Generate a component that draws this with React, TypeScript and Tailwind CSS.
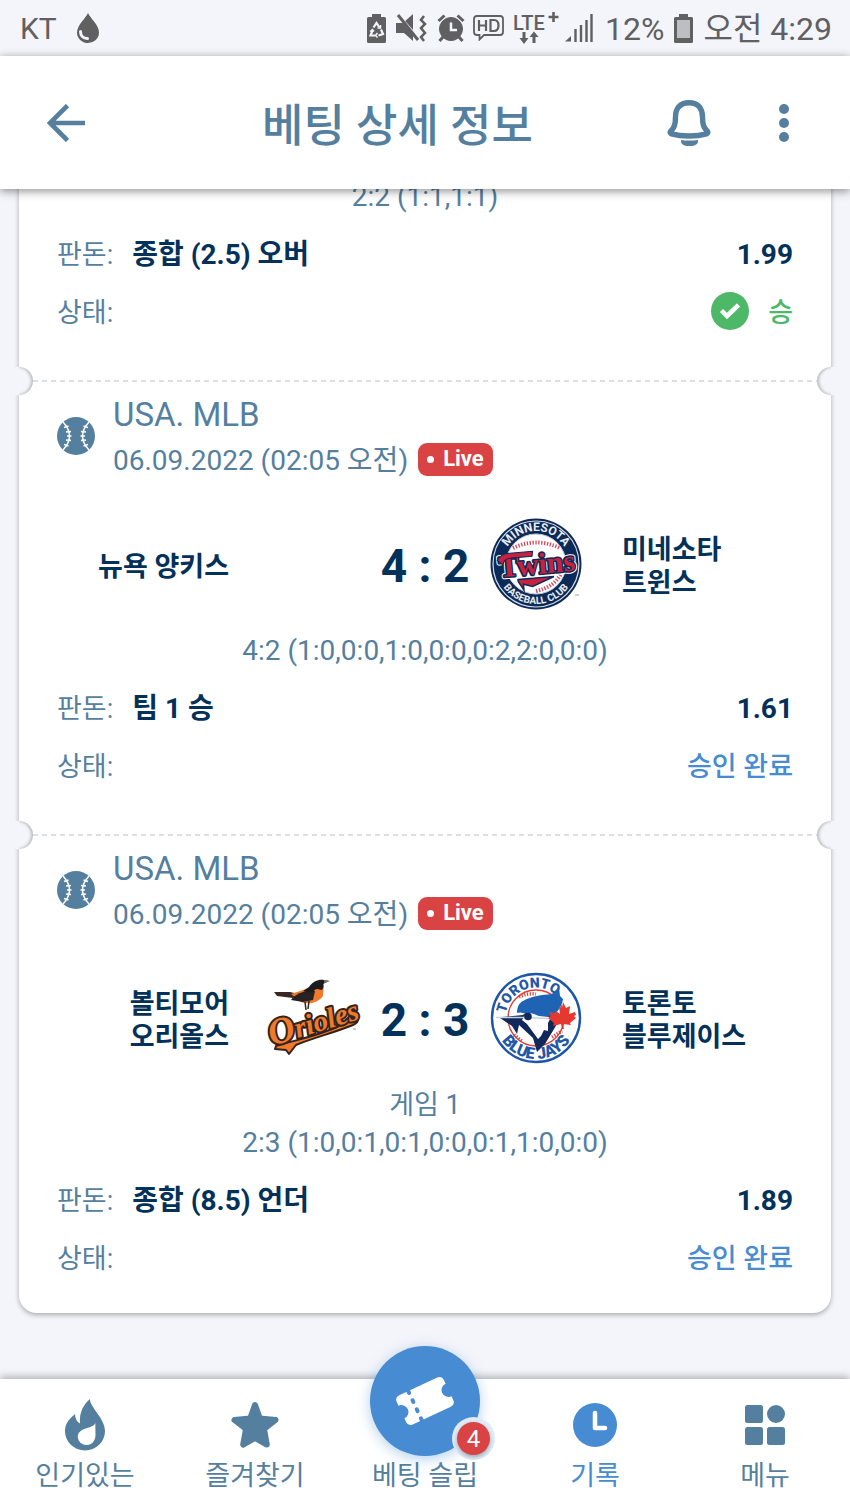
import type { ReactNode } from "react";
import { clsx } from "clsx";

type Pick = { label: string; odds: string; status: "won" | "accepted" };

type Game = {
  id: string;
  league: string;
  date: string;
  home: string[];
  away: string[];
  homeLogo?: ReactNode;
  awayLogo?: ReactNode;
  score: string;
  note?: string;
  periods: string;
  pick: Pick;
};

/* ---------- status bar ---------- */

function StatusBar() {
  return (
    <div className="flex h-14 shrink-0 items-center justify-between bg-[#f4f5fa] pl-5 pr-[18px] text-[#606062]">
      <div className="flex items-center gap-[19px]">
        <span className="pt-[2px] text-[30px] leading-none">KT</span>
        <svg viewBox="0 0 24 30" className="h-[30px] w-6" fill="currentColor">
          <path d="M12 0C10 5 1 12 1 19.500a11 10.500 0 0 0 22 0C23 12 14 5 12 0Z" />
          <path d="M4.500 18.500c0 4 2.500 7 7 7" fill="none" stroke="#f4f5fa" strokeWidth="3" strokeLinecap="round" />
        </svg>
      </div>
      <div className="flex items-center gap-[10px]">
        <svg viewBox="0 0 19 29" className="h-[29px] w-[19px]" fill="currentColor">
          <path d="M5 0h9v3h3.500q1.500 0 1.500 1.500v23q0 1.500-1.500 1.500h-16Q0 29 0 27.500v-23Q0 3 1.500 3H5Z" />
          <g fill="none" stroke="#f4f5fa" strokeWidth="2.200">
            <path d="M6.500 13.500 9.500 9l3 4.500M14 15.500l2 4.500-4.500 1.500M8 21.500H3.500l2-5" />
            <path d="m10.500 19-2 2.500 2 2M13.500 11v3h-3M3 17.500l2.500-2 1.500 2" strokeWidth="1.500" />
          </g>
        </svg>
        <svg viewBox="0 0 31 29" className="h-[29px] w-[31px]" fill="currentColor">
          <path d="M0 9h7L17 0v27l-9-8H0Z" />
          <path d="M0-1 24 26" stroke="#f4f5fa" strokeWidth="3" />
          <path d="M2 1 22 26" stroke="currentColor" strokeWidth="3" />
          <path d="m28 2-3 4 4 4-4 4 4 5-4 4 3 4" fill="none" stroke="currentColor" strokeWidth="2.500" />
        </svg>
        <svg viewBox="0 0 28 28" className="h-7 w-7" fill="none" stroke="currentColor">
          <circle cx="14" cy="15" r="11.500" fill="currentColor" />
          <path d="m1.500 7 6-5.500M26.500 7l-6-5.500" strokeWidth="3" />
          <path d="m6 23-3.500 4M22 23l3.500 4" strokeWidth="3" />
          <path d="M14 8.500V16h6" stroke="#f4f5fa" strokeWidth="2.500" />
        </svg>
        <svg viewBox="0 0 31 26" className="-ml-[2px] h-[26px] w-[31px]" fill="none" stroke="currentColor" strokeWidth="1.800">
          <path d="M4 1h23q3 0 3 3v13q0 3-3 3H11l-4.500 4.500V20H4q-3 0-3-3V4q0-3 3-3Z" />
          <path d="M6 5v11M13 5v11M6 10.500h7M17.500 5v11h3.500q4.500 0 4.500-5.500T21 5Z" strokeWidth="2.200" />
        </svg>
        <svg viewBox="0 0 45 34" className="h-[34px] w-[45px]" fill="currentColor">
          <text x="-1" y="19" fontSize="20" fontWeight="500">LTE</text>
          <path d="M39.500 1v10M34.500 6h10" stroke="currentColor" strokeWidth="2.600" />
          <path d="M8.500 21h3v6h3L10 33l-4.500-6h3ZM18.500 32h3v-6h3L20 20.500 15.500 26h3Z" />
        </svg>
        <svg viewBox="0 0 28 28" className="-ml-1 h-7 w-7" fill="none" stroke="currentColor" strokeWidth="2.400">
          <path d="M0 27.500 6 22v5.500Z" fill="currentColor" stroke="none" />
          <path d="M10.500 15v13M16 11v17M21.500 6v22M26.500 0v28" />
        </svg>
        <span className="ml-[2px] pt-[2px] text-[32px] leading-none">12%</span>
        <svg viewBox="0 0 19 29" className="h-[29px] w-[19px]" fill="currentColor">
          <path d="M5 0h9v3h3.500q1.500 0 1.500 1.500v23q0 1.500-1.500 1.500h-16Q0 29 0 27.500v-23Q0 3 1.500 3H5Z" />
          <path d="M3 6h13v18H3Z" fill="#bdbec3" />
        </svg>
        <span className="pt-[2px] text-[32px] leading-none">오전 4:29</span>
      </div>
    </div>
  );
}

/* ---------- header ---------- */

function Header() {
  return (
    <header className="relative z-10 flex h-[133px] shrink-0 items-stretch bg-white pr-[19px] text-[#557f9f] shadow-[0_2px_9px_rgba(0,0,0,0.45)]">
      <button type="button" aria-label="뒤로" className="grid w-[131px] place-items-center">
        <svg viewBox="0 0 38 38" className="size-[38px]" fill="none" stroke="currentColor" strokeWidth="4.600">
          <path d="M38 19H4M20.500 1.500 3 19l17.500 17.500" />
        </svg>
      </button>
      <h1 className="flex-1 self-center pt-2 pl-[22px] text-center text-[45px] leading-[56px] font-medium">베팅 상세 정보</h1>
      <button type="button" aria-label="알림" className="grid w-[94px] place-items-center">
        <svg viewBox="0 0 44 48" className="h-12 w-11" fill="none" stroke="currentColor" strokeLinejoin="round">
          <path d="M22 3.700C12.500 3.700 8.500 10 8.500 18c0 8-1.500 11-5 14.500-.8 1 0 2 1 2.300 10 3 25 3 35 0 1-.3 1.800-1.300 1-2.300-3.500-3.500-5-6.500-5-14.500C35.500 10 31.500 3.700 22 3.700Z" strokeWidth="5.400" />
          <path d="M14 41c5 .8 11 .8 17 0 .5 4-2.500 6-8.500 6S13.500 45 14 41Z" fill="currentColor" stroke="none" />
        </svg>
      </button>
      <button type="button" aria-label="더보기" className="grid w-[95px] place-items-center">
        <svg viewBox="0 0 10 38" className="h-[38px] w-[10px]" fill="currentColor">
          <circle cx="5" cy="5" r="5" />
          <circle cx="5" cy="19" r="5" />
          <circle cx="5" cy="33" r="5" />
        </svg>
      </button>
    </header>
  );
}

/* ---------- team logos ---------- */

function TwinsLogo() {
  return (
    <svg viewBox="0 0 94 94" className="size-[94px]" role="img" aria-label="Minnesota Twins">
      <defs>
        <path id="twins-top" d="M14 47a33 33 0 0 1 66 0" />
        <path id="twins-bottom" d="M7 47a40 40 0 0 0 80 0" />
      </defs>
      <circle cx="47" cy="47" r="45.500" fill="#0c2a58" />
      <circle cx="47" cy="47" r="43" fill="none" stroke="#d5dae6" strokeWidth="1.200" />
      <circle cx="47" cy="47" r="30" fill="#fff" stroke="#c3cbd9" strokeWidth="1" />
      <g fill="none" stroke="#dc4560" strokeWidth="4" strokeDasharray="1.300 1.600">
        <path d="M24 31q23-11 47 0" />
        <path d="M47 74q19-4 26-19" />
      </g>
      <g fill="#e8ecf3" fontFamily="Roboto" fontWeight="700" textAnchor="middle">
        <text fontSize="12"><textPath href="#twins-top" startOffset="50%">MINNESOTA</textPath></text>
        <text fontSize="10"><textPath href="#twins-bottom" startOffset="50%">BASEBALL CLUB</textPath></text>
      </g>
      <g transform="rotate(-5 47 50)">
        <path d="M28 61h36l-22 8-9-3v6l-5-9Z" fill="#c8203f" stroke="#0c2a58" strokeWidth="1.500" />
        <g fontFamily="Liberation Serif" fontWeight="700" fontSize="30" textAnchor="middle" fill="#c8203f" paintOrder="stroke" strokeLinejoin="round">
          <text x="48" y="57" stroke="#fff" strokeWidth="5">Twins</text>
          <text x="48" y="57" stroke="#0c2a58" strokeWidth="3">Twins</text>
        </g>
        <path d="M9 40q5-7 13-6h23l-1 5H22q-6 0-8 6Z" fill="#c8203f" stroke="#0c2a58" />
      </g>
      <path d="M86 78h4" stroke="#9aa3b3" />
    </svg>
  );
}

function OriolesLogo() {
  return (
    <svg viewBox="0 0 94 94" className="size-[94px] overflow-visible" role="img" aria-label="Baltimore Orioles">
      <g transform="translate(0 7)">
        <path d="m7 14 16 0 9 2-6 4-16-2Z" fill="#3a2621" />
        <path d="M24 16c8-3 17-5 22-8 4-4 8-5 11-4l-1 14c-5 7-15 9-22 6Z" fill="#f0792b" />
        <path d="M24 22c4-6 14-10 24-9l-2 9-10 2Z" fill="#262223" />
        <path d="M42 9c4-6 10-8 15-7l5 1-6 3c1 3 0 6-2 6-4-1-5-2-8 2-4 1-7 0-10-1Z" fill="#1d1b1c" />
        <path d="m57 2 6 1-6 2Z" fill="#747474" />
        <path d="m38 24 1 8M42 23l-1 8" stroke="#30241f" strokeWidth="1.500" />
      </g>
      <path d="M9 75c19-6 38-9 61-19 8-3 11-7 15-10 8-3 8 5 1 8-20 8-40 13-57 20l-7 9-3-4-11-1Z" fill="#f0792b" stroke="#33231d" strokeWidth="2" strokeLinejoin="round" />
      <g transform="rotate(-17 46 54)" fontFamily="Liberation Serif" fontStyle="italic" fontWeight="700" textAnchor="middle" strokeLinejoin="round">
        <text x="47" y="62" fontSize="29" fill="#f0792b" stroke="#33231d" strokeWidth="4" paintOrder="stroke">
          <tspan fontSize="37">O</tspan>rioles
        </text>
      </g>
      <path d="M86 58h3" stroke="#a79d99" />
    </svg>
  );
}

function BlueJaysLogo() {
  return (
    <svg viewBox="0 0 94 94" className="size-[94px]" role="img" aria-label="Toronto Blue Jays">
      <defs>
        <path id="jays-top" d="M16.500 47a30.500 30.500 0 0 1 61 0" />
        <path id="jays-bottom" d="M6 47a41 41 0 0 0 82 0" />
      </defs>
      <circle cx="47" cy="47" r="44" fill="#fff" stroke="#1f57a8" strokeWidth="2.400" />
      <circle cx="47" cy="47" r="28" fill="#fff" stroke="#e23b35" strokeWidth="1.300" />
      <path d="M30 26q8-4 17-3M25 64l8 6M63 66l10-6" stroke="#e23b35" strokeWidth="3.500" strokeDasharray="1.200 1.600" fill="none" />
      <g fill="#1f57a8" fontFamily="Roboto" fontWeight="900" textAnchor="middle">
        <text fontSize="14"><textPath href="#jays-top" startOffset="39%">TORONTO</textPath></text>
        <text fontSize="16"><textPath href="#jays-bottom" startOffset="50%">BLUE JAYS</textPath></text>
      </g>
      <path d="M28 42c0-6 2-10 6-12 8-5 20-6 28-7 4-1 6-4 8-7l1 9 3 3c-1 8-6 13-10 17H40q-6-5-12-3Z" fill="#1f63b5" />
      <path d="M7 46.500 34 44c2-2 5-3 8-1l4 2h17l5 8-12 20-8 8-4-14-14-13-2 9-5-8-12-8Z" fill="#10285a" />
      <path d="M36 44c5-4 10 0 14 1l12 1-3 6v8l-4-1-3 6-3 3-11-15-5-4Z" fill="#fff" />
      <path d="M7 46.500h30l22 1" stroke="#c7d2e4" strokeWidth="1.300" fill="none" />
      <circle cx="39" cy="45.500" r="3.800" fill="#10285a" />
      <path d="m74 31 3 6 4-2-1 8 6-2 1 3-2 1 2 2-6 5 1 2-8-1 1 5h-2l-1-5-8 2 1-3-6-5 3-2-2-4 6 1 1-2 4 3-1-8 3 2Z" fill="#e5392f" />
    </svg>
  );
}

/* ---------- bet slip ---------- */

function BaseballIcon() {
  return (
    <svg viewBox="0 0 38 38" className="mt-[22px] size-[38px] shrink-0">
      <circle cx="19" cy="19" r="19" fill="#557f9f" />
      <g fill="none" stroke="#fff" strokeWidth="1.500">
        <path d="M6 5q13 14 0 28M32 5q-13 14 0 28" />
        <path d="m7 10.500 4.500-1.500M9 15l5-.5M10 19h4.500M9 23l5 .5M7 27.500l4.500 1.500M31 10.500 26.500 9M29 15l-5-.5M28 19h-4.500M29 23l-5 .5M31 27.500 26.500 29" />
      </g>
    </svg>
  );
}

function Perforation() {
  return (
    <div className="relative h-[3px]">
      <div className="mx-[14px] h-[2px] bg-[repeating-linear-gradient(90deg,#dcdeea_0_5px,transparent_5px_9px)]" />
      <span className="absolute -top-[13px] -left-[14px] size-7 rounded-full bg-[#f4f5fa] shadow-[inset_-2px_0_3px_rgba(60,60,70,0.3)]" />
      <span className="absolute -top-[13px] -right-[14px] size-7 rounded-full bg-[#f4f5fa] shadow-[inset_2px_0_3px_rgba(60,60,70,0.3)]" />
      <span className="absolute -top-[13px] -left-[18px] h-7 w-[18px] bg-[#f4f5fa]" />
      <span className="absolute -top-[13px] -right-[18px] h-7 w-[18px] bg-[#f4f5fa]" />
    </div>
  );
}

function PickStatus({ status }: { status: Pick["status"] }) {
  if (status === "won") {
    return (
      <dd className="ml-auto flex items-center gap-[19px] font-medium text-[#4cb868]">
        <svg viewBox="0 0 38 38" className="mb-[5px] size-[38px]">
          <circle cx="19" cy="19" r="19" fill="#4cb868" />
          <path d="m10.500 18.500 5.500 5.500L27.500 13" fill="none" stroke="#fff" strokeWidth="4.500" />
        </svg>
        승
      </dd>
    );
  }
  return <dd className="ml-auto font-medium text-[#478bd2]">승인 완료</dd>;
}

function Team({ name, side }: { name: string[]; side: "home" | "away" }) {
  return (
    <div className={clsx("pt-[6px] text-[27px] leading-[33px] font-bold text-[#033159]", side === "home" ? "pr-[38px] text-right" : "pl-[39px]")}>
      {name.map((line) => (
        <div key={line}>{line}</div>
      ))}
    </div>
  );
}

function GameSection({ game }: { game: Game }) {
  return (
    <section>
      <Perforation />
      <div className="px-[38px] pt-3">
        <div className="flex items-start gap-[18px]">
          <BaseballIcon />
          <div className="text-[#557f9f]">
            <h2 className="text-[33px] leading-10">{game.league}</h2>
            <div className="flex h-[51px] items-center gap-[10px] text-[28px]">
              <time>{game.date}</time>
              <span className="mb-[3px] flex h-[33px] items-center gap-[9px] rounded-[9px] bg-[#d94343] px-[9px] text-[22px] leading-none font-bold text-white">
                <i className="size-[7px] rounded-full bg-white" />
                Live
              </span>
            </div>
          </div>
        </div>
        <div className="mt-[31px] grid grid-cols-[1fr_94px_128px_94px_1fr] items-center">
          <Team name={game.home} side="home" />
          <div className="h-[94px]">{game.homeLogo}</div>
          <strong className="pt-1 text-center text-[46px] leading-none font-bold text-[#033159]">{game.score}</strong>
          <div className="h-[94px]">{game.awayLogo}</div>
          <Team name={game.away} side="away" />
        </div>
      </div>
      <div className="mt-[21px]">
        <GameResult note={game.note} periods={game.periods} pick={game.pick} />
      </div>
    </section>
  );
}

function GameResult({ note, periods, pick }: { note?: string; periods: string; pick: Pick }) {
  return (
    <div className="px-[38px] text-[27px] text-[#557f9f]">
      <div className="mb-[11px] text-center leading-[38px]">
        {note && <p>{note}</p>}
        <p className="text-[28px] leading-[38px]">{periods}</p>
      </div>
      <dl>
        <div className="flex h-[57px] items-center">
          <dt className="mr-[19px]">판돈:</dt>
          <dd className="pb-[2px] text-[28px] font-bold text-[#033159]">{pick.label}</dd>
          <dd className="ml-auto pb-[2px] text-[28px] font-bold text-[#033159]">{pick.odds}</dd>
        </div>
        <div className="flex h-[57px] items-center pt-[2px]">
          <dt>상태:</dt>
          <PickStatus status={pick.status} />
        </div>
      </dl>
    </div>
  );
}

const games: Game[] = [
  {
    id: "nyy-min",
    league: "USA. MLB",
    date: "06.09.2022 (02:05 오전)",
    home: ["뉴욕 양키스"],
    away: ["미네소타", "트윈스"],
    awayLogo: <TwinsLogo />,
    score: "4 : 2",
    periods: "4:2 (1:0,0:0,1:0,0:0,0:2,2:0,0:0)",
    pick: { label: "팀 1 승", odds: "1.61", status: "accepted" },
  },
  {
    id: "bal-tor",
    league: "USA. MLB",
    date: "06.09.2022 (02:05 오전)",
    home: ["볼티모어", "오리올스"],
    away: ["토론토", "블루제이스"],
    homeLogo: <OriolesLogo />,
    awayLogo: <BlueJaysLogo />,
    score: "2 : 3",
    note: "게임 1",
    periods: "2:3 (1:0,0:1,0:1,0:0,0:1,1:0,0:0)",
    pick: { label: "종합 (8.5) 언더", odds: "1.89", status: "accepted" },
  },
];

/* ---------- bottom navigation ---------- */

function NavItem({ label, active, children }: { label: string; active?: boolean; children: ReactNode }) {
  return (
    <a
      href="#"
      aria-current={active ? "page" : undefined}
      className={clsx("flex flex-1 flex-col items-center gap-[3px] pt-[18px] text-[27px] leading-10", active ? "text-[#478bd2]" : "text-[#557f9f]")}
    >
      <span className="grid h-[56px] place-items-center">{children}</span>
      {label}
    </a>
  );
}

function BottomNav() {
  return (
    <nav className="relative z-10 flex h-[132px] shrink-0 bg-white shadow-[0_-2px_8px_rgba(0,0,0,0.3)]">
      <NavItem label="인기있는">
        <svg viewBox="0 0 40 52" className="h-[52px] w-10" fill="currentColor">
          <path d="M25 0c-.5 8 15 19 15 32a20 19.500 0 0 1-40 0c0-7 4-12 10-17 0 4 2 8 5 9.500C14 13 19 5 25 0Z" />
          <path d="M30.300 24c-2 6-17.500 4-17.500 14a8.800 8.200 0 0 0 8.700 8c6 0 9-5 9-10Z" fill="#fff" />
        </svg>
      </NavItem>
      <NavItem label="즐겨찾기">
        <svg viewBox="0 0 48 48" className="size-12" fill="currentColor" stroke="currentColor" strokeWidth="6" strokeLinejoin="round">
          <path d="m24 4 4.800 13.500L44.500 19 33 28l2.800 15.500L24 37l-11.800 6.500L15 28 3.500 19l15.700-1.500Z" />
        </svg>
      </NavItem>
      <div className="relative flex flex-1">
        <NavItem label="베팅 슬립">
          <span className="absolute -top-[33px] grid size-[110px] place-items-center rounded-full bg-[#478bd2] shadow-[0_3px_14px_rgba(71,139,210,0.4)]">
            <svg viewBox="0 0 60 52" className="h-[52px] w-[60px]">
              <g transform="rotate(-25 30 26)">
                <path d="M9 10h42q5 0 5 5v4a7 7 0 0 0 0 14v4q0 5-5 5H9q-5 0-5-5v-4a7 7 0 0 0 0-14v-4q0-5 5-5Z" fill="#fff" />
                <path d="M19 10v34" stroke="#478bd2" strokeWidth="4" strokeLinecap="round" strokeDasharray="2 8" />
              </g>
            </svg>
            <span className="absolute -right-[10px] bottom-[1px] grid size-[33px] place-items-center rounded-full bg-[#d94343] text-[24px] leading-none text-white shadow-[0_2px_4px_rgba(0,0,0,0.3),0_0_0_5px_#e0ebf8]">
              4
            </span>
          </span>
        </NavItem>
      </div>
      <NavItem label="기록" active>
        <svg viewBox="0 0 44 44" className="size-11">
          <circle cx="22" cy="22" r="22" fill="currentColor" />
          <path d="M22 10v15h10" fill="none" stroke="#fff" strokeWidth="4.500" strokeLinecap="round" strokeLinejoin="round" />
        </svg>
      </NavItem>
      <NavItem label="메뉴">
        <svg viewBox="0 0 40 40" className="size-10" fill="currentColor">
          <rect width="18" height="18" rx="2.500" />
          <circle cx="31" cy="9" r="9" />
          <rect y="22" width="18" height="18" rx="2.500" />
          <rect x="22" y="22" width="18" height="18" rx="2.500" />
        </svg>
      </NavItem>
    </nav>
  );
}

export default function App() {
  return (
    <div className="flex h-screen flex-col bg-[#f4f5fa] font-['Roboto','Noto_Sans_CJK_KR',sans-serif]">
      <StatusBar />
      <Header />
      {/* the list is anchored to its end, so the oldest game slides under the header */}
      <main className="flex min-h-0 flex-1 flex-col justify-end overflow-hidden px-[19px] pb-[66px]">
        <article className="rounded-b-[18px] bg-white pb-[26px] shadow-[0_2px_5px_rgba(0,0,0,0.3)]">
          <div className="pb-[39px]">
            <GameResult periods="2:2 (1:1,1:1)" pick={{ label: "종합 (2.5) 오버", odds: "1.99", status: "won" }} />
          </div>
          {games.map((game, i) => (
            <div key={game.id} className={clsx(i < games.length - 1 && "pb-[39px]")}>
              <GameSection game={game} />
            </div>
          ))}
        </article>
      </main>
      <BottomNav />
    </div>
  );
}
